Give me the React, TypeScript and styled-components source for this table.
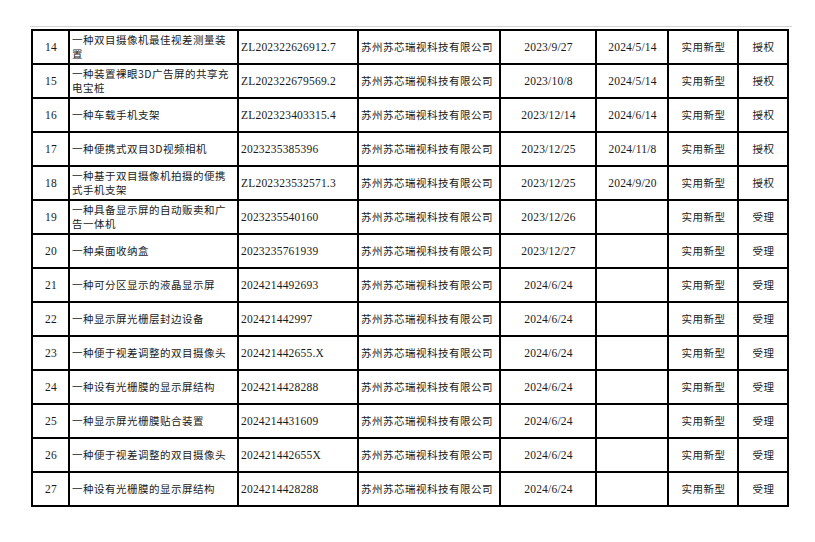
import { createGlobalStyle, styled } from "styled-components";

type Row = {
    no: string,
    name: string[],
    code: string,
    applied: string,
    granted: string,
    status: string
}

const rows: Row[] = [
    { no: "14", name: ["一种双目摄像机最佳视差测量装", "置"], code: "ZL202322626912.7", applied: "2023/9/27", granted: "2024/5/14", status: "授权" },
    { no: "15", name: ["一种装置裸眼3D广告屏的共享充", "电宝桩"], code: "ZL202322679569.2", applied: "2023/10/8", granted: "2024/5/14", status: "授权" },
    { no: "16", name: ["一种车载手机支架"], code: "ZL202323403315.4", applied: "2023/12/14", granted: "2024/6/14", status: "授权" },
    { no: "17", name: ["一种便携式双目3D视频相机"], code: "2023235385396", applied: "2023/12/25", granted: "2024/11/8", status: "授权" },
    { no: "18", name: ["一种基于双目摄像机拍摄的便携", "式手机支架"], code: "ZL202323532571.3", applied: "2023/12/25", granted: "2024/9/20", status: "授权" },
    { no: "19", name: ["一种具备显示屏的自动贩卖和广", "告一体机"], code: "2023235540160", applied: "2023/12/26", granted: "", status: "受理" },
    { no: "20", name: ["一种桌面收纳盒"], code: "2023235761939", applied: "2023/12/27", granted: "", status: "受理" },
    { no: "21", name: ["一种可分区显示的液晶显示屏"], code: "2024214492693", applied: "2024/6/24", granted: "", status: "受理" },
    { no: "22", name: ["一种显示屏光栅层封边设备"], code: "202421442997", applied: "2024/6/24", granted: "", status: "受理" },
    { no: "23", name: ["一种便于视差调整的双目摄像头"], code: "202421442655.X", applied: "2024/6/24", granted: "", status: "受理" },
    { no: "24", name: ["一种设有光栅膜的显示屏结构"], code: "2024214428288", applied: "2024/6/24", granted: "", status: "受理" },
    { no: "25", name: ["一种显示屏光栅膜贴合装置"], code: "2024214431609", applied: "2024/6/24", granted: "", status: "受理" },
    { no: "26", name: ["一种便于视差调整的双目摄像头"], code: "202421442655X", applied: "2024/6/24", granted: "", status: "受理" },
    { no: "27", name: ["一种设有光栅膜的显示屏结构"], code: "2024214428288", applied: "2024/6/24", granted: "", status: "受理" },
]

const widths = [37, 169, 120, 142, 96, 72, 70, 50]

const App = () => {
    return (
        <>
            <Global />
            <Page>
                <PageEdge />
                <Table>
                    <colgroup>
                        {widths.map((w, i) => <col key={i} style={{ width: w }} />)}
                    </colgroup>
                    <tbody>
                        {rows.map(r => (
                            <tr key={r.no}>
                                <Cell $align="center" $latin>{r.no}</Cell>
                                <Cell>
                                    {r.name.map((line, i) => <Line key={i}>{line}</Line>)}
                                </Cell>
                                <Cell $latin>{r.code}</Cell>
                                <Cell>苏州苏芯瑞视科技有限公司</Cell>
                                <Cell $align="center" $latin>{r.applied}</Cell>
                                <Cell $align="center" $latin>{r.granted}</Cell>
                                <Cell $align="center">实用新型</Cell>
                                <Cell $align="center">{r.status}</Cell>
                            </tr>
                        ))}
                    </tbody>
                </Table>
            </Page>
        </>
    )
}

const Global = createGlobalStyle`
    html, body {
        margin: 0;
        padding: 0;
        background: #ffffff;
    }
    body {
        font-family: "Noto Sans CJK SC", "Liberation Serif", serif;
        color: #111;
    }
`

const Page = styled.div`
    width: 815px;
    height: 542px;
    padding-top: 26px;
    padding-left: 31px;
    box-sizing: border-box;
`

const PageEdge = styled.div`
    width: 762px;
    height: 0;
    margin-left: -1px;
    border-top: 1px solid #d4d4d4;
    margin-bottom: 2px;
`

const Table = styled.table`
    border-collapse: collapse;
    table-layout: fixed;
    width: 756px;
    border: 2px solid #000;
`

const Cell = styled.td<{ $align?: "left" | "center", $latin?: boolean }>`
    border: 2px solid #000;
    height: 32px;
    padding: 0 1px 0 2px;
    vertical-align: middle;
    text-align: ${p => p.$align ?? "left"};
    font-family: ${p => p.$latin
        ? `"Liberation Serif", "Noto Sans CJK SC", serif`
        : `"Noto Sans CJK SC", "Liberation Serif", sans-serif`};
    font-size: ${p => p.$latin ? "11.5px" : "10.5px"};
    letter-spacing: ${p => p.$latin ? "0.2px" : "0.5px"};
    line-height: 14px;
    white-space: nowrap;
    overflow: hidden;
    color: #1a1a1a;
`

const Line = styled.div`
    line-height: 14px;
`

export default App;
